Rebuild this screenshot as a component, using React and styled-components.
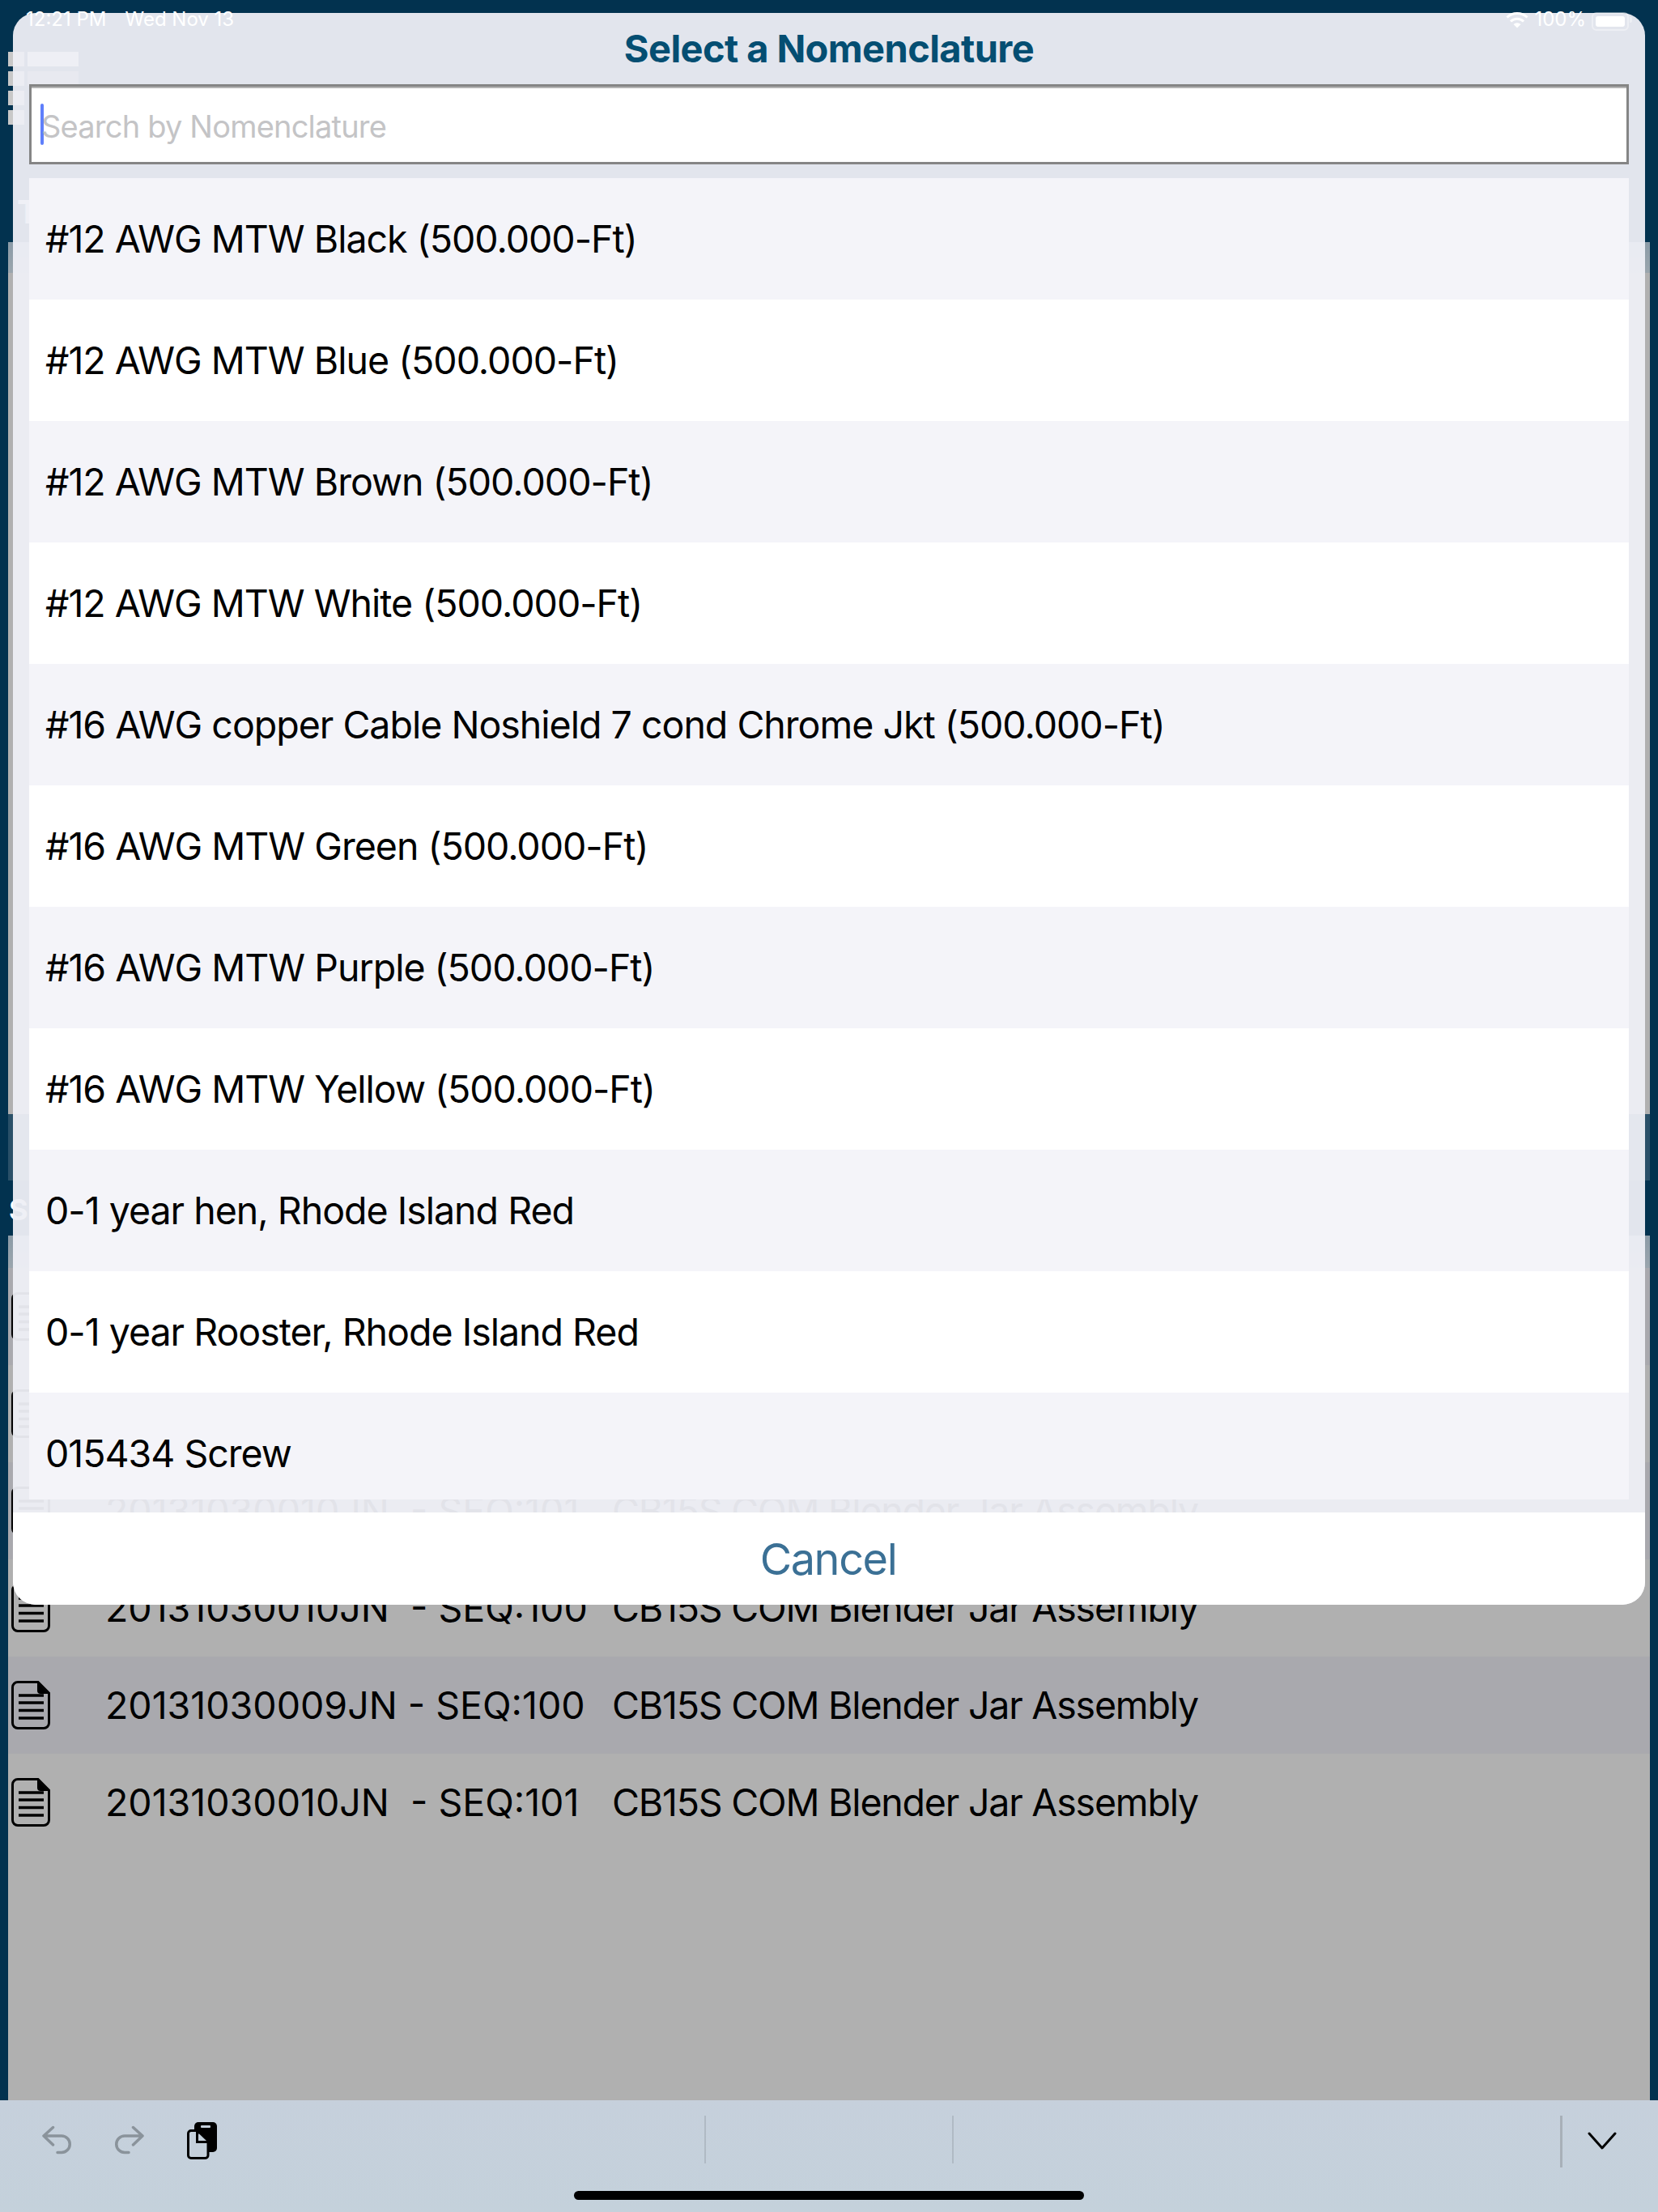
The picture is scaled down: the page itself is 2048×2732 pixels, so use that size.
import React from "react";
import styled, { createGlobalStyle } from "styled-components";

const GlobalStyle = createGlobalStyle`
  html, body {
    margin: 0;
    padding: 0;
    background: #02324f;
  }
  * {
    box-sizing: border-box;
  }
`;

const Page = styled.div`
  position: relative;
  width: 2048px;
  height: 2732px;
  overflow: hidden;
  display: flex;
  flex-direction: column;
  background: #02324f;
  font-family: Inter, "Liberation Sans", sans-serif;
`;

const StatusBar = styled.div`
  position: absolute;
  z-index: 3;
  top: 0;
  left: 0;
  right: 0;
  height: 44px;
  padding: 8px 36px 0 32px;
  display: flex;
  align-items: flex-start;
  justify-content: space-between;
  color: #fff;
  font-size: 24px;
  line-height: 32px;
`;

const StatusGroup = styled.div`
  display: flex;
  align-items: center;
  gap: ${(p) => p.$gap}px;
`;

const Battery = styled.div`
  position: relative;
  width: 46px;
  height: 23px;
  padding: 3px;
  border: 2px solid rgba(255, 255, 255, 0.4);
  border-radius: 6px;
  margin-top: 4px;

  &::before {
    content: "";
    display: block;
    height: 100%;
    background: #fff;
    border-radius: 3px;
  }

  &::after {
    content: "";
    position: absolute;
    top: 4px;
    right: -6px;
    width: 3px;
    height: 7px;
    border-radius: 0 2px 2px 0;
    background: rgba(255, 255, 255, 0.4);
  }
`;

const AppHeader = styled.header`
  height: 299px;
  padding: 64px 0 0 10px;
  display: flex;
  flex-direction: column;
`;

const MenuGrid = styled.div`
  display: grid;
  grid-template-columns: 20px 63px;
  grid-auto-rows: 18px;
  gap: 6px 4px;
  width: 87px;
`;

const MenuBlock = styled.span`
  grid-column: ${(p) => (p.$wide ? 2 : 1)};
  background: ${(p) => p.$color || "#c8c8c8"};
`;

const HeaderTitle = styled.div`
  margin: 90px 0 0 11px;
  font-size: 40px;
  line-height: 36px;
  font-weight: 700;
  color: #fff;
`;

const TopPanel = styled.section`
  height: 1077px;
  margin: 0 10px;
  background: #b0b0b0;
`;

const PanelHead = styled.div`
  height: ${(p) => p.$height}px;
  background: linear-gradient(#8b9ba7, #9aa5ad);
`;

const SubBand = styled.div`
  height: 82px;
  margin: 0 10px;
  background: #2a5068;
`;

const SectionHead = styled.div`
  height: 68px;
  padding: 18px 0 0 11px;
  font-size: 36px;
  line-height: 36px;
  font-weight: 700;
  color: #fff;
`;

const DocPanel = styled.section`
  flex: 1;
  margin: 0 10px;
  background: #b0b0b0;
`;

const DocRow = styled.div`
  height: 120px;
  padding-left: 4px;
  display: flex;
  align-items: center;
  font-size: 46.5px;
  color: #000;
  white-space: pre;
  background: ${(p) => (p.$shade ? "#a9a9ae" : "#b0b0b0")};
`;

const DocCode = styled.span`
  width: 626px;
  margin-left: 68px;
`;

const DocName = styled.span`
  letter-spacing: -1.2px;
`;

const Toolbar = styled.footer`
  position: relative;
  height: 138px;
  flex-shrink: 0;
  display: flex;
  align-items: flex-start;
  background: linear-gradient(#c6d0dc, #c4d1db);
`;

const ToolIcon = styled.svg`
  flex-shrink: 0;
  margin: ${(p) => p.$top}px 0 0 ${(p) => p.$left}px;
  transform: ${(p) => (p.$flip ? "scaleX(-1)" : "none")};
`;

const ToolDivider = styled.span`
  flex-shrink: 0;
  width: ${(p) => p.$width}px;
  height: ${(p) => p.$height}px;
  margin: 19px 0 0 ${(p) => p.$left}px;
  background: ${(p) => p.$color};
`;

const HomeIndicator = styled.span`
  position: absolute;
  left: 709px;
  bottom: 15px;
  width: 630px;
  height: 11px;
  border-radius: 6px;
  background: #000;
`;

const Sheet = styled.div`
  position: absolute;
  z-index: 2;
  top: 16px;
  left: 16px;
  width: 2016px;
  height: 1966px;
  display: flex;
  flex-direction: column;
  border-radius: 28px;
  overflow: hidden;
  background: rgba(238, 239, 245, 0.948);
`;

const SheetTitle = styled.h1`
  margin: 0;
  height: 87px;
  flex-shrink: 0;
  display: flex;
  align-items: center;
  justify-content: center;
  font-size: 47px;
  font-weight: 700;
  letter-spacing: -0.6px;
  color: #044e72;
`;

const SearchBox = styled.div`
  height: 99px;
  flex-shrink: 0;
  margin: 1px 20px 0;
  padding-left: 11px;
  display: flex;
  align-items: center;
  background: #fff;
  border: 3px solid #858585;
  box-shadow: inset 0 2px 0 #b4b4b4;
`;

const Caret = styled.span`
  width: 4px;
  height: 51px;
  flex-shrink: 0;
  border-radius: 2px;
  background: #5f7ffb;
`;

const Placeholder = styled.span`
  margin: 5px 0 0 -3px;
  font-size: 38px;
  letter-spacing: -0.8px;
  color: #c4c4c6;
`;

const OptionList = styled.div`
  height: 1632px;
  flex-shrink: 0;
  margin: 17px 20px 16px;
  overflow: hidden;
`;

const Option = styled.div`
  height: 150px;
  padding-left: 20px;
  display: flex;
  align-items: center;
  font-size: 46.5px;
  letter-spacing: -1px;
  color: #000;
  background: ${(p) => (p.$odd ? "#f4f4f9" : "#fff")};
`;

const CancelButton = styled.button`
  flex: 1;
  border: 0;
  padding: 0 2px 0 0;
  background: #fff;
  font-family: inherit;
  font-size: 54px;
  letter-spacing: -1.4px;
  color: #3b7095;
`;

const options = [
  "#12 AWG MTW Black (500.000-Ft)",
  "#12 AWG MTW Blue (500.000-Ft)",
  "#12 AWG MTW Brown (500.000-Ft)",
  "#12 AWG MTW White (500.000-Ft)",
  "#16 AWG copper Cable Noshield 7 cond Chrome Jkt (500.000-Ft)",
  "#16 AWG MTW Green (500.000-Ft)",
  "#16 AWG MTW Purple (500.000-Ft)",
  "#16 AWG MTW Yellow (500.000-Ft)",
  "0-1 year hen, Rhode Island Red",
  "0-1 year Rooster, Rhode Island Red",
  "015434 Screw",
];

// the first two rows lie under the sheet, only their icons show past its edge
const docs = [
  { shade: true },
  {},
  { code: "20131030010JN  - SEQ:101", shade: true },
  { code: "20131030010JN  - SEQ:100" },
  { code: "20131030009JN - SEQ:100", shade: true },
  { code: "20131030010JN  - SEQ:101" },
];

function DocIcon() {
  return (
    <svg width="48" height="60" viewBox="0 0 48 60" fill="none">
      <path
        d="M8 1.5H33L46.5 15V52a6.5 6.5 0 0 1-6.5 6.5H8A6.5 6.5 0 0 1 1.5 52V8A6.5 6.5 0 0 1 8 1.5z"
        stroke="#000"
        strokeWidth="3"
      />
      <path d="M32 2L46 16H36a4 4 0 0 1-4-4z" fill="#000" />
      <path d="M9 18H40M9 27H40M9 36.500H40M9 46H40" stroke="#000" strokeWidth="3.500" />
    </svg>
  );
}

function ArrowIcon({ left, flip }) {
  return (
    <ToolIcon $top={31} $left={left} $flip={flip} width="36" height="36" viewBox="0 0 36 36" fill="none">
      <path
        d="M13.500 2.500L2 13L13.500 24M2 13H24a10.200 10.200 0 0 1 0 20.500H19"
        stroke="#8a939b"
        strokeWidth="3.500"
        strokeLinecap="round"
        strokeLinejoin="round"
      />
    </ToolIcon>
  );
}

function PasteIcon() {
  return (
    <ToolIcon $top={27} $left={53} width="38" height="46" viewBox="0 0 38 46" fill="none">
      <rect x="9" y="0" width="28" height="37" rx="5" fill="#000" />
      <rect x="17" y="4" width="12" height="3" rx="1" fill="#c5d0db" />
      <path
        d="M5 10.500H12.500L26 25V41a3.500 3.500 0 0 1-3.500 3.500H5A3.500 3.500 0 0 1 1.500 41V14A3.500 3.500 0 0 1 5 10.500z"
        fill="#c5d0db"
        stroke="#000"
        strokeWidth="3"
      />
      <path d="M12.500 10.500V24.500H26" stroke="#000" strokeWidth="3" />
      <path d="M14.500 14L24 23H14.500z" fill="#c5d0db" />
    </ToolIcon>
  );
}

function ChevronIcon() {
  return (
    <ToolIcon $top={38} $left={31} width="36" height="24" viewBox="0 0 36 24" fill="none">
      <path d="M2 3L18 21L34 3" stroke="#000" strokeWidth="3" strokeLinecap="round" strokeLinejoin="round" />
    </ToolIcon>
  );
}

function WifiIcon() {
  return (
    <svg width="28" height="21" viewBox="0 0 28 21" fill="none">
      <path d="M1.500 7.500a18 18 0 0 1 25 0" stroke="#fff" strokeWidth="3" />
      <path d="M6 12.500a11.500 11.500 0 0 1 16 0" stroke="#fff" strokeWidth="3" />
      <path d="M9.500 16a6.500 6.500 0 0 1 9 0L14 20.500z" fill="#fff" />
    </svg>
  );
}

export default function App() {
  return (
    <Page>
      <GlobalStyle />

      <StatusBar>
        <StatusGroup $gap={23}>
          <span>12:21 PM</span>
          <span>Wed Nov 13</span>
        </StatusGroup>
        <StatusGroup $gap={7}>
          <WifiIcon />
          <span>100%</span>
          <Battery />
        </StatusGroup>
      </StatusBar>

      <AppHeader>
        <MenuGrid>
          <MenuBlock />
          <MenuBlock $wide $color="#e6e6e6" />
          <MenuBlock />
          <MenuBlock $wide $color="#707a80" />
          <MenuBlock />
          <MenuBlock />
        </MenuGrid>
        <HeaderTitle>T</HeaderTitle>
      </AppHeader>

      <TopPanel>
        <PanelHead $height={38} />
      </TopPanel>
      <SubBand />
      <SectionHead>S</SectionHead>

      <DocPanel>
        <PanelHead $height={40} />
        {docs.map((doc, i) => (
          <DocRow key={i} $shade={doc.shade}>
            <DocIcon />
            {doc.code && <DocCode>{doc.code}</DocCode>}
            {doc.code && <DocName>CB15S COM Blender Jar Assembly</DocName>}
          </DocRow>
        ))}
      </DocPanel>

      <Toolbar>
        <ArrowIcon left={52} />
        <ArrowIcon left={54} flip />
        <PasteIcon />
        <ToolDivider $left={601} $width={2} $height={59} $color="#b0bac4" />
        <ToolDivider $left={304} $width={2} $height={59} $color="#b0bac4" />
        <ToolDivider $left={749} $width={3} $height={64} $color="#a8b0b8" />
        <ChevronIcon />
        <HomeIndicator />
      </Toolbar>

      <Sheet>
        <SheetTitle>Select a Nomenclature</SheetTitle>
        <SearchBox>
          <Caret />
          <Placeholder>Search by Nomenclature</Placeholder>
        </SearchBox>
        <OptionList>
          {options.map((name, i) => (
            <Option key={name} $odd={i % 2 === 0}>
              {name}
            </Option>
          ))}
        </OptionList>
        <CancelButton>Cancel</CancelButton>
      </Sheet>
    </Page>
  );
}
